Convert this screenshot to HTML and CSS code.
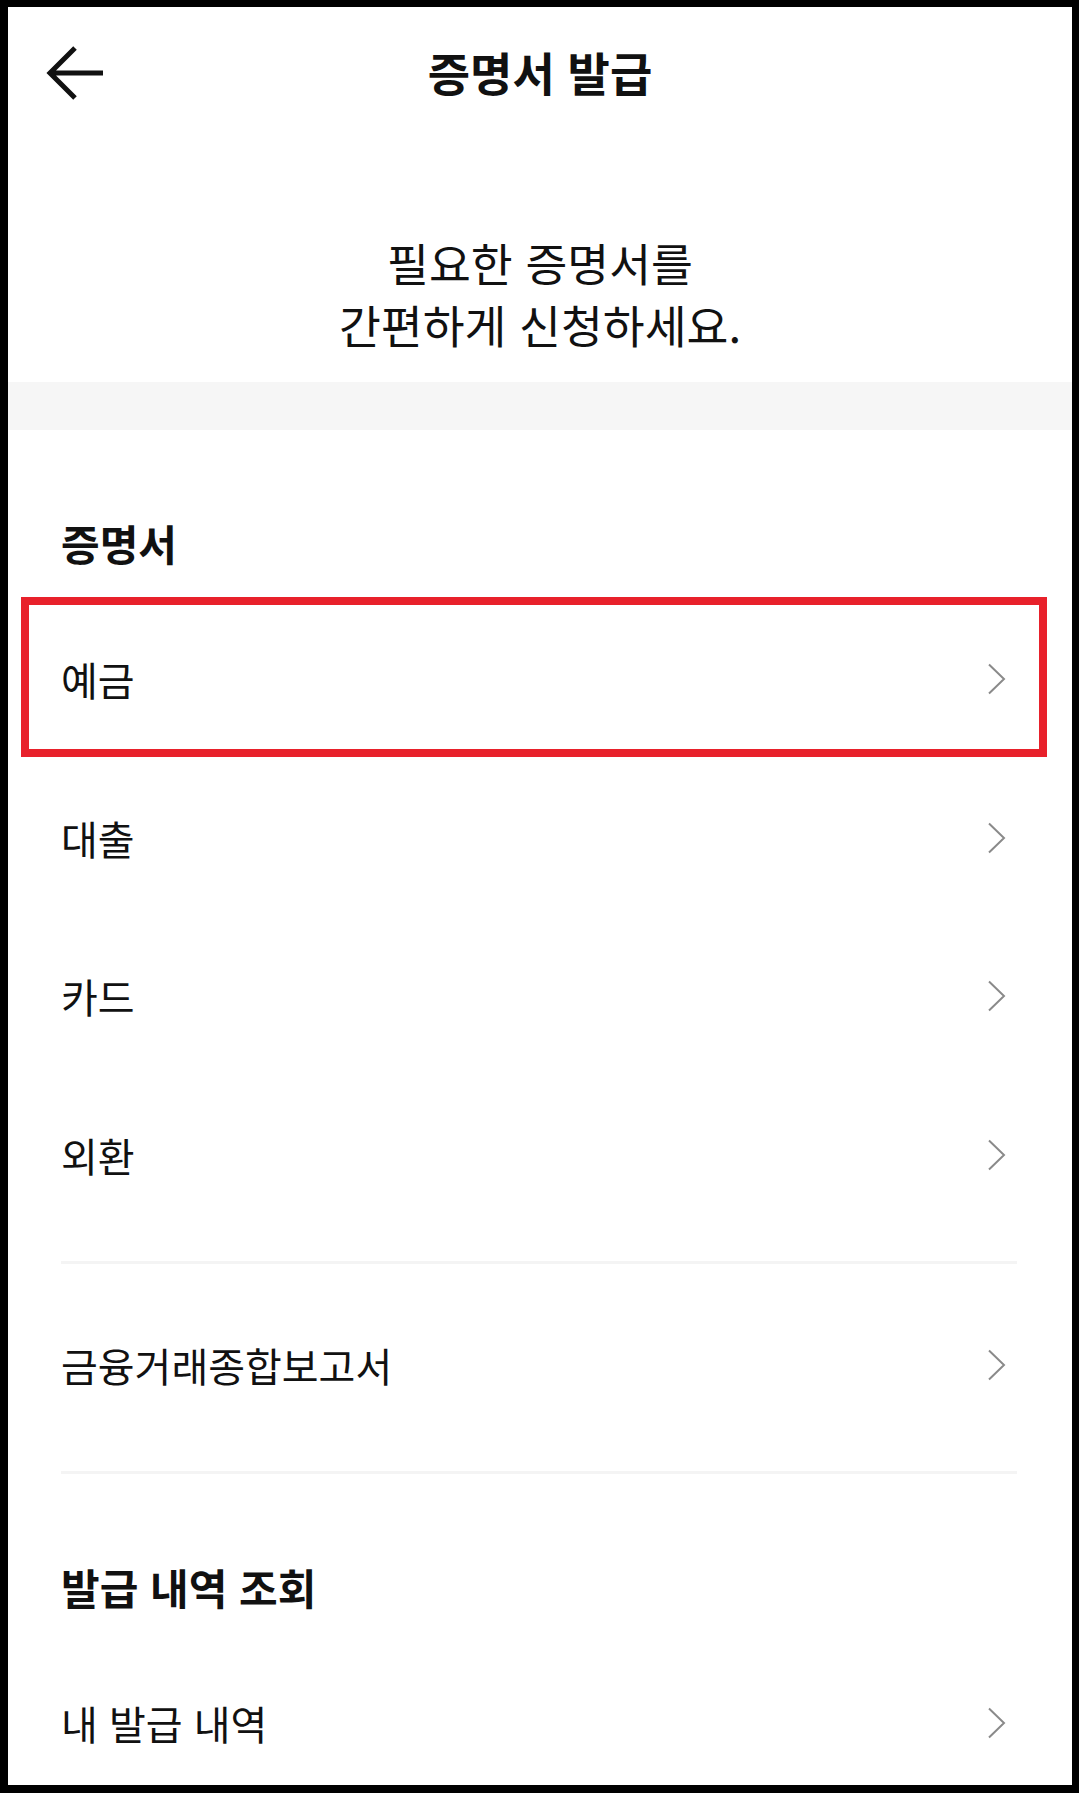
FILE: index.html
```html
<!DOCTYPE html>
<html lang="ko">
<head>
<meta charset="utf-8">
<title>증명서 발급</title>
<link rel="stylesheet" href="styles.css">
</head>
<body>
<div class="screen">
  <header class="topbar">
    <button class="back" aria-label="뒤로">
      <svg width="62" height="56" viewBox="0 0 62 56"><path d="M58 28H5M30 3L5 28L30 53" fill="none" stroke="#111" stroke-width="5" stroke-linejoin="miter"/></svg>
    </button>
    <h1 class="title">증명서 발급</h1>
    <span></span>
  </header>

  <p class="intro">필요한 증명서를<br>간편하게 신청하세요.</p>

  <div class="band"></div>

  <section class="group">
    <h2 class="group-title">증명서</h2>
    <ul class="list">
      <li class="row highlight"><span>예금</span><svg class="chev" width="20" height="32" viewBox="0 0 20 32"><path d="M2 1.5L17 16L2 30.5" fill="none" stroke="#8a8a8a" stroke-width="2"/></svg></li>
      <li class="row"><span>대출</span><svg class="chev" width="20" height="32" viewBox="0 0 20 32"><path d="M2 1.5L17 16L2 30.5" fill="none" stroke="#8a8a8a" stroke-width="2"/></svg></li>
      <li class="row"><span>카드</span><svg class="chev" width="20" height="32" viewBox="0 0 20 32"><path d="M2 1.5L17 16L2 30.5" fill="none" stroke="#8a8a8a" stroke-width="2"/></svg></li>
      <li class="row"><span>외환</span><svg class="chev" width="20" height="32" viewBox="0 0 20 32"><path d="M2 1.5L17 16L2 30.5" fill="none" stroke="#8a8a8a" stroke-width="2"/></svg></li>
    </ul>
    <div class="divider"></div>
    <ul class="list">
      <li class="row"><span>금융거래종합보고서</span><svg class="chev" width="20" height="32" viewBox="0 0 20 32"><path d="M2 1.5L17 16L2 30.5" fill="none" stroke="#8a8a8a" stroke-width="2"/></svg></li>
    </ul>
    <div class="divider divider-last"></div>
  </section>

  <section class="group">
    <h2 class="group-title">발급 내역 조회</h2>
    <ul class="list">
      <li class="row"><span>내 발급 내역</span><svg class="chev" width="20" height="32" viewBox="0 0 20 32"><path d="M2 1.5L17 16L2 30.5" fill="none" stroke="#8a8a8a" stroke-width="2"/></svg></li>
    </ul>
  </section>
</div>
</body>
</html>
```

FILE: styles.css
```css
html {
  background: #000;
}
body {
  margin: 0;
  font-family: "Noto Sans CJK KR", "Noto Sans", sans-serif;
  color: #111;
}
.screen {
  margin: 7px 7px 0 8px;
  height: 1778px;
  background: #fff;
  overflow: hidden;
}
.topbar {
  height: 132px;
  display: grid;
  grid-template-columns: 1fr auto 1fr;
  align-items: center;
}
.back {
  justify-self: start;
  margin-left: 37px;
  padding: 0;
  border: 0;
  background: none;
  display: flex;
}
.title {
  margin: 0;
  padding-bottom: 4px;
  font-size: 46px;
  font-weight: 700;
  line-height: 56px;
}
.intro {
  margin: 0;
  padding: 92px 0 27px;
  text-align: center;
  font-size: 45.5px;
  line-height: 62px;
  font-weight: 400;
}
.band {
  height: 48px;
  background: #f6f6f6;
}
.group {
  padding: 88px 55px 0 53px;
}
.group-title {
  margin: 0 0 32px;
  font-size: 42px;
  line-height: 50px;
  font-weight: 700;
}
.list {
  list-style: none;
  margin: 0;
  padding: 0;
}
.row {
  position: relative;
  height: 158.6px;
  display: flex;
  align-items: center;
  justify-content: space-between;
  font-size: 40px;
  line-height: 50px;
}
.chev {
  margin-right: 10px;
  flex: none;
}
.highlight::after {
  content: "";
  position: absolute;
  left: -40px;
  right: -30px;
  top: -3px;
  bottom: 2px;
  border: 8px solid #e8212b;
}
.divider {
  height: 3px;
  margin: 27px 0 21px;
  background: #f4f4f4;
}
.divider-last {
  margin-bottom: 0;
}
```
